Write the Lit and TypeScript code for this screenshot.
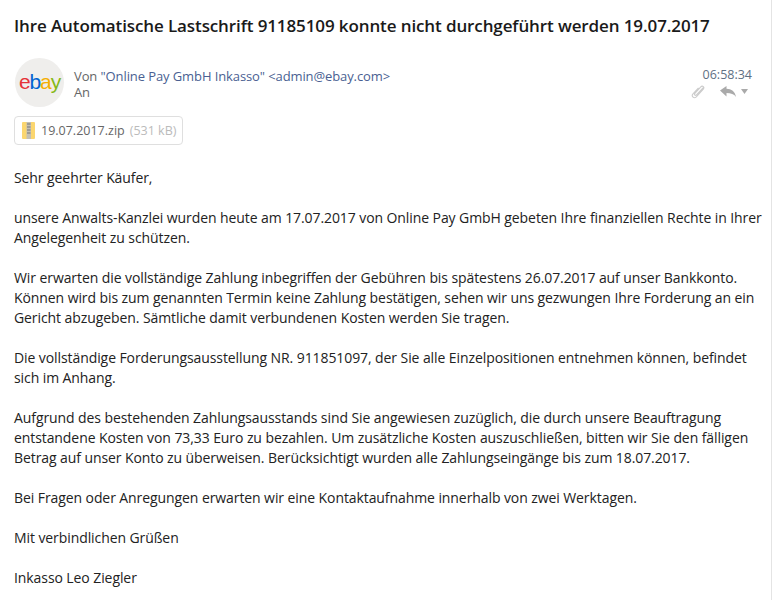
import { LitElement, html, css } from "lit";
import { customElement } from "lit/decorators.js";

@customElement("app-root")
export class AppRoot extends LitElement {
  static styles = css`
    :host { display: block; width: 772px; height: 600px; overflow: hidden; background: #fff; box-sizing: border-box; border-right: 1px solid #e4e4e4; font-family: "Open Sans", "Noto Sans", sans-serif; color: #222; }
    h1 { margin: 0; padding: 14px 14px 0; font-size: 17px; letter-spacing: -0.11px; line-height: 24px; font-weight: 600; color: #1a1a1a; white-space: nowrap; }
    .head { display: flex; margin: 20px 0 0 15px; height: 49px; padding-right: 19px; }
    .avatar { width: 49px; height: 49px; border-radius: 50%; background: #efeeec; display: flex; align-items: center; justify-content: center; font: 21px/1 "Liberation Sans", sans-serif; letter-spacing: -1.1px; flex: none; box-sizing: border-box; padding-bottom: 2px; }
    .e { color: #e53238; } .b { color: #0064d2; } .a { color: #f5af02; } .y { color: #86b817; }
    .meta { margin-left: 10px; padding-top: 10px; font-size: 13px; letter-spacing: -0.1px; line-height: 16px; color: #666; flex: 1; }
    .from { color: #4a5f92; }
    .side { display: flex; flex-direction: column; align-items: flex-end; padding-top: 9px; font-size: 12.5px; line-height: 16px; color: #5f7084; }
    .tools { display: flex; align-items: center; margin: 0 4px 0 0; height: 16px; }
    .clip { margin-right: 15px; }
    .reply { margin-right: 5px; }
    .att { display: flex; width: fit-content; align-items: center; margin: 9px 0 0 14px; height: 29px; box-sizing: border-box; border: 1px solid #dfdfdf; border-radius: 4px; padding: 0 6px 0 7px; font-size: 12.5px; color: #666; }
    .zip { margin-right: 6px; }
    .size { color: #bbb; margin-left: 5px; }
    .body { margin-top: 23px; padding: 0 0 0 14px; font-size: 14px; letter-spacing: -0.085px; line-height: 20px; color: #222; }
    p { margin: 0 0 20px; white-space: nowrap; }
  `;

  render() {
    return html`
      <h1>Ihre Automatische Lastschrift 91185109 konnte nicht durchgeführt werden 19.07.2017</h1>
      <div class="head">
        <div class="avatar"><span class="e">e</span><span class="b">b</span><span class="a">a</span><span class="y">y</span></div>
        <div class="meta">
          <div>Von <span class="from">"Online Pay GmbH Inkasso" &lt;admin@ebay.com&gt;</span></div>
          <div>An</div>
        </div>
        <div class="side">
          <div>06:58:34</div>
          <div class="tools">
            <svg class="clip" width="14" height="15" viewBox="0 0 14 15" fill="none" stroke="#ccc" stroke-width="1.1"><path d="M12.500 3.500 5.500 10.800c-1.200 1.200-2.700-.2-1.600-1.500L9.800 2.800c1.700-1.800 4.100.5 2.500 2.400L5.300 12.800c-2.300 2.300-5.400-.5-3.300-3L7.500 3.800"/></svg>
            <svg class="reply" width="16" height="11" viewBox="0 0 16 11" fill="#aaa"><path d="M0 4.500 6.500 0v2.800C11.500 2.800 15 5.500 16 11c-2-3-5-4-9.500-4v3.500z"/></svg>
            <svg width="7" height="5" viewBox="0 0 7 5" fill="#aaa"><path d="M0 0h7L3.500 5z"/></svg>
          </div>
        </div>
      </div>
      <div class="att">
        <svg class="zip" width="13" height="17" viewBox="0 0 13 17"><rect width="13" height="17" rx="1" fill="#fbd66f"/><rect x="4.500" width="4.500" height="17" fill="#c4c0b4"/><path d="M5 2h3.500M5 5h3.500M5 8h3.500M5 11h3.500" stroke="#777"/></svg>
        <span>19.07.2017.zip</span><span class="size">(531 kB)</span>
      </div>
      <div class="body">
        <p>Sehr geehrter Käufer,</p>
        <p>unsere Anwalts-Kanzlei wurden heute am 17.07.2017 von Online Pay GmbH gebeten Ihre finanziellen Rechte in Ihrer<br>Angelegenheit zu schützen.</p>
        <p>Wir erwarten die vollständige Zahlung inbegriffen der Gebühren bis spätestens 26.07.2017 auf unser Bankkonto.<br>Können wird bis zum genannten Termin keine Zahlung bestätigen, sehen wir uns gezwungen Ihre Forderung an ein<br>Gericht abzugeben. Sämtliche damit verbundenen Kosten werden Sie tragen.</p>
        <p>Die vollständige Forderungsausstellung NR. 911851097, der Sie alle Einzelpositionen entnehmen können, befindet<br>sich im Anhang.</p>
        <p>Aufgrund des bestehenden Zahlungsausstands sind Sie angewiesen zuzüglich, die durch unsere Beauftragung<br>entstandene Kosten von 73,33 Euro zu bezahlen. Um zusätzliche Kosten auszuschließen, bitten wir Sie den fälligen<br>Betrag auf unser Konto zu überweisen. Berücksichtigt wurden alle Zahlungseingänge bis zum 18.07.2017.</p>
        <p>Bei Fragen oder Anregungen erwarten wir eine Kontaktaufnahme innerhalb von zwei Werktagen.</p>
        <p>Mit verbindlichen Grüßen</p>
        <p>Inkasso Leo Ziegler</p>
      </div>
    `;
  }
}
